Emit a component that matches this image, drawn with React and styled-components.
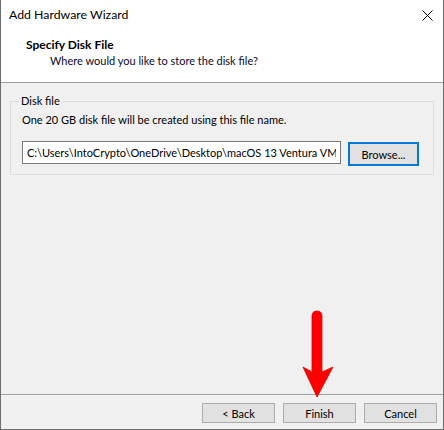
import React from "react";
import styled, { createGlobalStyle } from "styled-components";

const GlobalStyle = createGlobalStyle`
  html, body {
    margin: 0;
    padding: 0;
    background: #ffffff;
  }
  * {
    box-sizing: border-box;
  }
`;

const Window = styled.div`
  position: relative;
  width: 444px;
  height: 430px;
  display: flex;
  flex-direction: column;
  border: 1px solid #6e6e6e;
  border-top: none;
  background: #f0f0f0;
  font-family: Lato, "Noto Sans", sans-serif;
  font-size: 11px;
  color: #000;
  overflow: hidden;
`;

const TitleBar = styled.div`
  height: 31px;
  display: flex;
  align-items: center;
  justify-content: space-between;
  padding: 0 10px 1px 8px;
  background: #fff;
`;

const TitleText = styled.span`
  font-size: 12.3px;
  line-height: 16px;
`;

const Header = styled.div`
  height: 52px;
  padding: 6px 0 0 25px;
  background: #fff;
  border-bottom: 1px solid #a0a0a0;
`;

const HeaderTitle = styled.div`
  font-size: 12px;
  font-weight: 700;
  line-height: 16px;
`;

const HeaderSub = styled.div`
  padding-left: 24px;
  line-height: 16px;
  color: #0a0a2a;
`;

const Body = styled.div`
  flex: 1;
  padding: 10px 9px 0 9px;
`;

const Group = styled.fieldset`
  margin: 0;
  padding: 3px 9px 8px 11px;
  border: 1px solid #dcdcdc;
`;

const Legend = styled.legend`
  padding: 0 2px;
  margin-left: -3px;
  line-height: 16px;
`;

const Info = styled.div`
  line-height: 16px;
  margin-bottom: 13px;
`;

const Row = styled.div`
  display: flex;
  align-items: flex-start;
  gap: 7px;
`;

const PathInput = styled.input`
  width: 319px;
  height: 23px;
  padding: 0 4px;
  border: 1px solid #7a7a7a;
  background: #fff;
  font: inherit;
  color: #000;
  outline: none;
`;

const Button = styled.button`
  width: ${(p) => (p.$wide ? 71 : 73)}px;
  height: ${(p) => (p.$focused ? 24 : 20)}px;
  margin-top: ${(p) => (p.$focused ? 1 : 0)}px;
  padding: 0;
  border: ${(p) => (p.$focused ? "2px solid #0078d7" : "1px solid #adadad")};
  background: #e1e1e1;
  font: inherit;
  color: #000;
`;

const Footer = styled.div`
  height: 35px;
  display: flex;
  justify-content: flex-end;
  gap: 8px;
  padding: 8px 6px 0 0;
  border-top: 1px solid #a0a0a0;
`;

const Arrow = styled.svg`
  position: absolute;
  left: 300px;
  top: 308px;
`;

const CloseIcon = () => (
  <svg width="11" height="11" viewBox="0 0 11 11">
    <path d="M0.5 0.5 L10.5 10.5 M10.5 0.5 L0.5 10.5" stroke="#000" strokeWidth="1" />
  </svg>
);

export default function App() {
  return (
    <>
      <GlobalStyle />
      <Window>
        <TitleBar>
          <TitleText>Add Hardware Wizard</TitleText>
          <CloseIcon />
        </TitleBar>
        <Header>
          <HeaderTitle>Specify Disk File</HeaderTitle>
          <HeaderSub>Where would you like to store the disk file?</HeaderSub>
        </Header>
        <Body>
          <Group>
            <Legend>Disk file</Legend>
            <Info>One 20 GB disk file will be created using this file name.</Info>
            <Row>
              <PathInput
                readOnly
                value="C:\Users\IntoCrypto\OneDrive\Desktop\macOS 13 Ventura VMDK\macOS 13 Ventura.vmdk"
              />
              <Button $focused $wide>Browse...</Button>
            </Row>
          </Group>
        </Body>
        <Footer>
          <Button>&lt; Back</Button>
          <Button>Finish</Button>
          <Button>Cancel</Button>
        </Footer>
        <Arrow width="34" height="92" viewBox="0 0 34 92">
          <path d="M11 8 Q11 3 16 3 Q21 3 21 8 L21 64 L32 59 L16 89 L2 59 L11 64 Z" fill="#ff0000" stroke="#e00000" strokeWidth="0.8" />
        </Arrow>
      </Window>
    </>
  );
}
